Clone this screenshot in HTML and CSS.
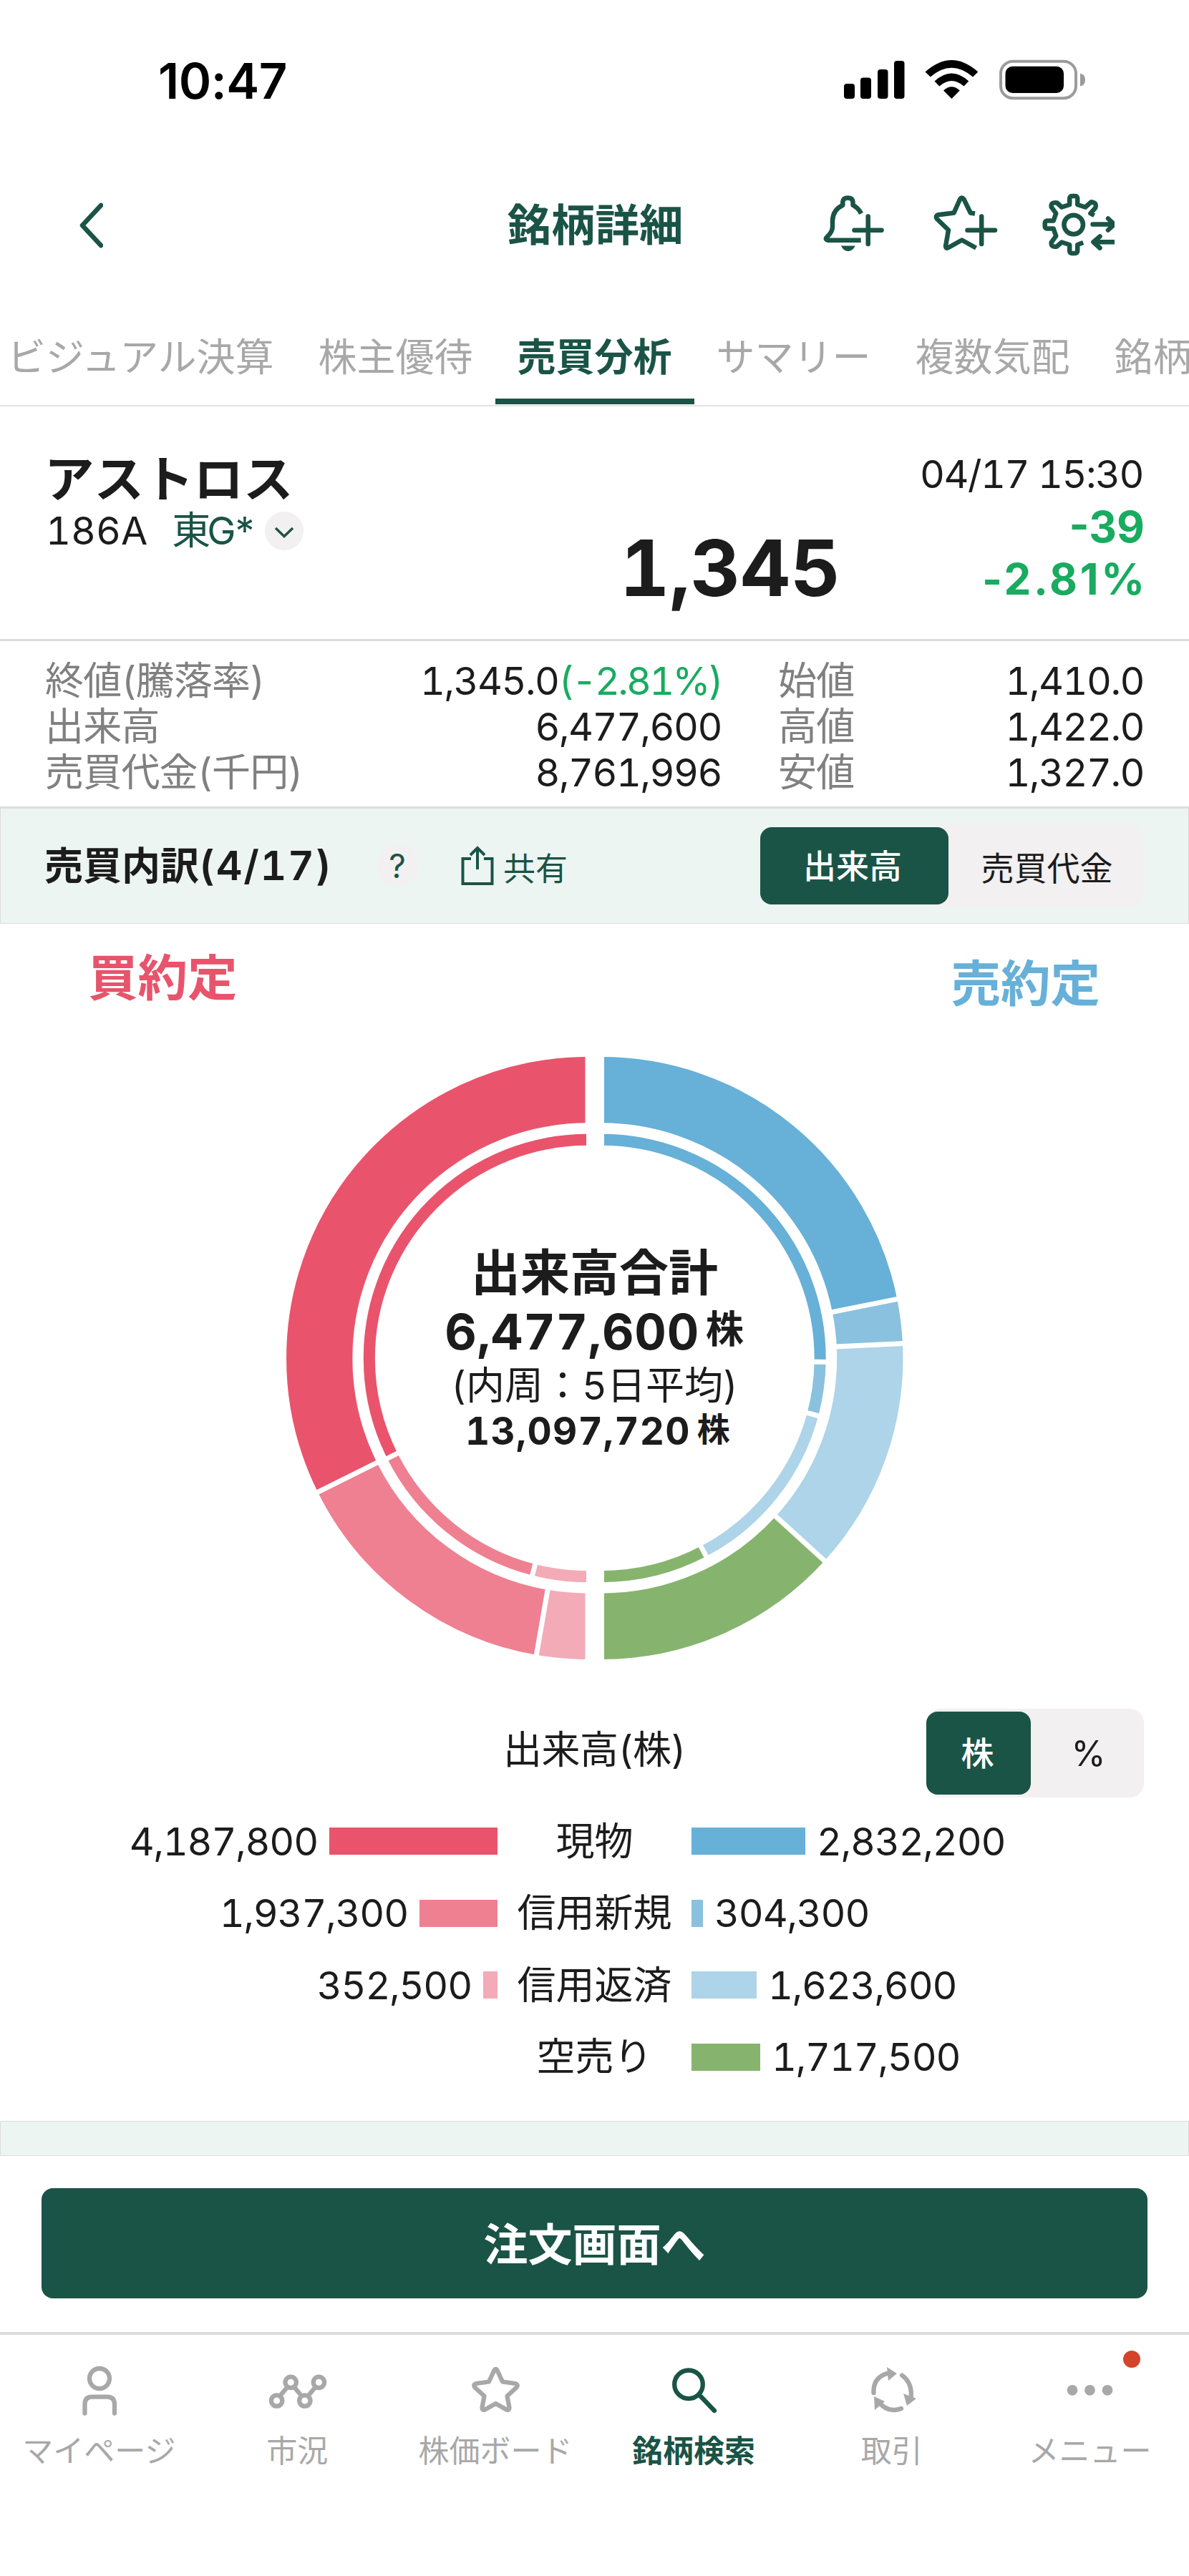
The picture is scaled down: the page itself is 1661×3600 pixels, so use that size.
FILE: index.html
```html
<!DOCTYPE html>
<html lang="ja">
<head>
<meta charset="UTF-8">
<meta name="viewport" content="width=device-width, initial-scale=1.0">
<title>銘柄詳細</title>
<link rel="stylesheet" href="styles.css">
</head>
<body>
    <div class="status-bar">
        <span class="clock">10:47</span>
        <svg class="status-icons" width="340" height="60" viewBox="0 0 340 60">
            <rect x="1" y="35" width="15" height="21" rx="4"/>
            <rect x="24" y="26.500" width="15" height="29.500" rx="4"/>
            <rect x="48" y="15" width="14.500" height="41" rx="4"/>
            <rect x="71" y="3" width="14.500" height="53" rx="4"/>
            <path d="M114.500 18.500Q151.400-14.500 188.300 18.500L181 25.500Q151.400 0 121.800 25.500Z"/>
            <path d="M127.500 31.500Q151.400 9.500 175.300 31.500L168.500 38.500Q151.400 23.500 134.300 38.500Z"/>
            <path d="M140 44.500Q151.400 34 162.800 44.500L151.400 56Z"/>
            <rect x="220" y="3.700" width="105" height="51.500" rx="17" fill="none" stroke="#9b9b9b" stroke-width="4"/>
            <rect x="226.500" y="10.700" width="81.500" height="37.300" rx="10"/>
            <path d="M331 20.500Q338 22 338 29.500T331 38.500Z" fill="#9b9b9b"/>
        </svg>
    </div>

    <header class="header">
        <svg class="back" width="40" height="70" viewBox="0 0 40 70"><path d="M37 7L11 35L37 63"/></svg>
        <h1>銘柄詳細</h1>
        <div class="header-icons">
            <svg width="88" height="92" viewBox="0 0 88 92">
                <path d="M52.700 67.700H7Q1.500 66.500 5.500 63Q13 56 13 49V40Q13.700 25 27.300 18.700V14Q28 8.500 34.400 8.500T41.500 14V18.700Q49 22.500 53 30.500"/>
                <path class="solid" d="M24.800 75.500H44.800Q41 83 34.800 83T24.800 75.500Z"/>
                <path class="round" d="M62.700 34.500V73M43.500 53.700H81.500"/>
            </svg>
            <svg class="favorite" width="92" height="92" viewBox="0 0 92 92">
                <path d="M59 30.500L52.800 29.500L43.500 10.500Q40.700 6.500 38 10.500L29.600 29.500L7.500 32.200Q3 34 6 38L22 53.500L18 76Q18.500 80 22 78L40.700 67.500L60.500 78.500"/>
                <path class="round" d="M68.200 34.500V73M48.500 53.700H87"/>
            </svg>
            <svg width="103" height="92" viewBox="0 0 103 92">
                <path transform="translate(45.700 46)" d="M29-13L23.700-15.900L30.500-23.500Q33-31 24.700-31.800L16.500-24.500L5.500-28V-37Q5-40 2-40H-2Q-5-40-5.500-37V-28L-16.500-24.500L-23-30.500Q-32-32-31-24.700L-24.500-15.900L-28-5.500H-37Q-40-5-40-2V2Q-40 5-37 5.500H-28L-24.500 15.900L-31 24.700Q-32 32-23.500 30.500L-16.500 24.500L-5.500 28V37Q-5 40-2 40H2Q5 40 5.500 37V28L13.500 25"/>
                <circle cx="45.700" cy="46" r="13.300"/>
                <path class="round" d="M72.500 45.500H104M94 37.500L102.500 45.500L94 53.500M73.500 70.300H104M82.500 62.500L73.500 70.300L82.500 78.500"/>
            </svg>
        </div>
    </header>

    <nav class="tabs">
        <a class="tab">ビジュアル決算</a>
        <a class="tab">株主優待</a>
        <a class="tab active">売買分析</a>
        <a class="tab">サマリー</a>
        <a class="tab">複数気配</a>
        <a class="tab">銘柄</a>
    </nav>

    <section class="summary">
        <div class="stock">
            <div class="stock-name">アストロス</div>
            <div class="stock-code">
                <span>186A</span>
                <span class="market">東G*</span>
                <svg width="54" height="54" viewBox="0 0 54 54"><circle cx="27" cy="27" r="27"/><path d="M15 23L27 34.500L39 23"/></svg>
            </div>
        </div>
        <div class="price">1,345</div>
        <div class="change">
            <div class="date">04/17 15:30</div>
            <div class="down">-39</div>
            <div class="down rate">-2.81%</div>
        </div>
    </section>

    <section class="stats">
        <span class="label">終値(騰落率)</span>
        <span class="value">1,345.0<span class="pct">(-2.81%)</span></span>
        <span class="label">始値</span>
        <span class="value">1,410.0</span>
        <span class="label">出来高</span>
        <span class="value">6,477,600</span>
        <span class="label">高値</span>
        <span class="value">1,422.0</span>
        <span class="label">売買代金(千円)</span>
        <span class="value">8,761,996</span>
        <span class="label">安値</span>
        <span class="value">1,327.0</span>
    </section>

    <section class="breakdown-head">
        <h2>売買内訳<span class="day">(4/17)</span></h2>
        <span class="help">?</span>
        <a class="share">
            <svg width="46" height="56" viewBox="0 0 46 56"><path d="M14 18H2.500V53H43.500V18H32M23 33V3M13 13L23 3L33 13"/></svg>
            <span>共有</span>
        </a>
        <div class="toggle toggle-wide">
            <span class="on">出来高</span>
            <span>売買代金</span>
        </div>
    </section>

    <section class="chart">
        <div class="sides">
            <span class="buy">買約定</span>
            <span class="sell">売約定</span>
        </div>
        <div class="donut">
            <svg width="862" height="844" viewBox="0 0 862 844">
                <!-- buy side, counterclockwise from the top -->
                <g transform="translate(421 422) scale(-1 1)">
                    <g class="ring">
                        <circle r="374.800" pathLength="360" stroke-dasharray="116.400 360" stroke="#e9546c" transform="rotate(-90)"/>
                        <circle r="374.800" pathLength="360" stroke-dasharray="53.800 360" stroke="#ef8091" transform="rotate(26.400)"/>
                        <circle r="374.800" pathLength="360" stroke-dasharray="9.800 360" stroke="#f3abb7" transform="rotate(80.200)"/>
                    </g>
                    <g class="ring-inner">
                        <circle r="305.200" pathLength="360" stroke-dasharray="116.600 360" stroke="#e9546c" transform="rotate(-90)"/>
                        <circle r="305.200" pathLength="360" stroke-dasharray="49.100 360" stroke="#ef8091" transform="rotate(26.600)"/>
                        <circle r="305.200" pathLength="360" stroke-dasharray="14.300 360" stroke="#f3abb7" transform="rotate(75.700)"/>
                    </g>
                    <g class="gap">
                        <path d="M0-424V-322M0 424V322"/>
                        <path d="M0-318V-290M0 318V290" stroke-width="4"/>
                        <path d="M0-424V-322" transform="rotate(116.400)"/>
                        <path d="M0-424V-322" transform="rotate(170.200)"/>
                        <path d="M0-318V-290" transform="rotate(116.600)"/>
                        <path d="M0-318V-290" transform="rotate(165.700)"/>
                    </g>
                </g>
                <!-- sell side, clockwise from the top -->
                <g transform="translate(440.500 422)">
                    <g class="ring">
                        <circle r="374.800" pathLength="360" stroke-dasharray="78.700 360" stroke="#67b0d8" transform="rotate(-90)"/>
                        <circle r="374.800" pathLength="360" stroke-dasharray="8.500 360" stroke="#8ac1df" transform="rotate(-11.300)"/>
                        <circle r="374.800" pathLength="360" stroke-dasharray="45.100 360" stroke="#add4e8" transform="rotate(-2.800)"/>
                        <circle r="374.800" pathLength="360" stroke-dasharray="47.700 360" stroke="#86b46e" transform="rotate(42.300)"/>
                    </g>
                    <g class="ring-inner">
                        <circle r="305.200" pathLength="360" stroke-dasharray="91 360" stroke="#67b0d8" transform="rotate(-90)"/>
                        <circle r="305.200" pathLength="360" stroke-dasharray="13.900 360" stroke="#8ac1df" transform="rotate(1)"/>
                        <circle r="305.200" pathLength="360" stroke-dasharray="47.300 360" stroke="#add4e8" transform="rotate(14.900)"/>
                        <circle r="305.200" pathLength="360" stroke-dasharray="27.800 360" stroke="#86b46e" transform="rotate(62.200)"/>
                    </g>
                    <g class="gap">
                        <path d="M0-424V-290M0 424V290"/>
                        <path d="M0-424V-322" transform="rotate(78.700)"/>
                        <path d="M0-424V-322" transform="rotate(87.200)"/>
                        <path d="M0-424V-322" transform="rotate(132.300)"/>
                        <path d="M0-318V-290" transform="rotate(91)"/>
                        <path d="M0-318V-290" transform="rotate(104.900)"/>
                        <path d="M0-318V-290" transform="rotate(152.200)"/>
                    </g>
                </g>
            </svg>
            <div class="donut-text">
                <div class="total-title">出来高合計</div>
                <div class="total">6,477,600<small>株</small></div>
                <div class="avg-title">(内周：5日平均)</div>
                <div class="avg">13,097,720<small>株</small></div>
            </div>
        </div>

        <div class="table-head">
            <span class="table-title">出来高(株)</span>
            <div class="toggle toggle-narrow">
                <span class="on">株</span>
                <span>%</span>
            </div>
        </div>
        <div class="bars">
            <div class="bar-left">4,187,800<i class="bar red-1" style="width: 235px"></i></div>
            <div class="bar-name">現物</div>
            <div class="bar-right"><i class="bar blue-1" style="width: 159px"></i>2,832,200</div>

            <div class="bar-left">1,937,300<i class="bar red-2" style="width: 109px"></i></div>
            <div class="bar-name">信用新規</div>
            <div class="bar-right"><i class="bar blue-2" style="width: 16px"></i>304,300</div>

            <div class="bar-left">352,500<i class="bar red-3" style="width: 20px"></i></div>
            <div class="bar-name">信用返済</div>
            <div class="bar-right"><i class="bar blue-3" style="width: 91px"></i>1,623,600</div>

            <div class="bar-left"></div>
            <div class="bar-name">空売り</div>
            <div class="bar-right"><i class="bar green" style="width: 96px"></i>1,717,500</div>
        </div>
    </section>

    <div class="divider"></div>

    <div class="order">
        <button class="order-button">注文画面へ</button>
    </div>

    <nav class="bottom-nav">
        <a class="nav-item">
            <svg width="80" height="80" viewBox="0 0 80 80"><circle cx="41" cy="24" r="14"/><path d="M20.500 72.500V60Q20.500 49.700 30.500 49.700H51.500Q62 49.700 62 60V72.500"/></svg>
            マイページ
        </a>
        <a class="nav-item">
            <svg width="80" height="80" viewBox="0 0 80 80"><circle cx="11.600" cy="55" r="7.700"/><circle cx="31.200" cy="29.300" r="7.700"/><circle cx="50.800" cy="55" r="7.700"/><circle cx="70.400" cy="29.300" r="7.700"/><path d="M16.400 48L26.400 36M36 36L46 48M55.600 48L65.600 36"/></svg>
            市況
        </a>
        <a class="nav-item">
            <svg width="80" height="80" viewBox="0 0 80 80"><path d="M38 13.500Q40.500 8.500 43 13.500L50 28.500L67.500 31Q73 32.500 69 37L56.500 48.500L59.500 64.500Q59.500 69 55.500 67.500L40.500 59L25.500 67.500Q21.500 69 21.500 64.500L24.500 48.500L12 37Q8 32.500 13.500 31L31 28.500Z"/></svg>
            株価ボード
        </a>
        <a class="nav-item active">
            <svg width="80" height="80" viewBox="0 0 80 80"><circle cx="33" cy="32.300" r="19.800"/><path d="M47.500 46.500L69 69"/></svg>
            銘柄検索
        </a>
        <a class="nav-item">
            <svg width="80" height="80" viewBox="-1 0 80 80">
                <path d="M13.500 44Q12.500 23 32 17M53 19.500Q68 30 65.500 51M52 66Q33 73 20 56"/>
                <path class="solid" d="M32 8L46 17L34 27ZM55 45L73 52L60 62ZM14 49L29 56L15 68Z"/>
            </svg>
            取引
        </a>
        <a class="nav-item">
            <svg width="80" height="80" viewBox="0 0 80 80"><g class="solid"><circle cx="15" cy="40.300" r="7.400"/><circle cx="39.500" cy="40.300" r="7.400"/><circle cx="64" cy="40.300" r="7.400"/></g></svg>
            メニュー
            <i class="badge"></i>
        </a>
    </nav>
</body>
</html>
```
FILE: styles.css
```css
:root {
    --primary-color: #1a5446;
    --text-color: #1c1c1c;
    --muted-color: #a8a8a8;
    --label-color: #808080;
    --down-color: #19ab60;
    --band-color: #edf5f2;
    --line-color: #dcdcdc;
    --toggle-color: #f2f0f1;
}

* {
    box-sizing: border-box;
}

body {
    margin: 0;
    width: 1661px;
    height: 3600px;
    overflow: hidden;
    background: #fff;
    color: var(--text-color);
    font-family: Inter, "Noto Sans CJK JP", sans-serif;
    font-size: 54px;
    font-feature-settings: "tnum";
}

h1, h2 {
    margin: 0;
}

svg {
    display: block;
    flex: none;
}

.status-bar {
    height: 214px;
    padding: 82px 143px 0 221px;
    display: flex;
    justify-content: space-between;
}

.clock {
    font-size: 69px;
    font-weight: 600;
    line-height: 62px;
    letter-spacing: -0.5px;
    color: #000;
    font-feature-settings: normal;
}

.header {
    height: 200px;
    padding: 2px 104px 0;
    display: grid;
    grid-template-columns: 1fr auto 1fr;
    align-items: center;
    color: var(--primary-color);
}

.header svg {
    fill: none;
    stroke: var(--primary-color);
    stroke-width: 6.5;
    stroke-linejoin: round;
}

.header .round, .back {
    stroke-linecap: round;
}

.header .solid {
    fill: var(--primary-color);
    stroke: none;
}

.header h1 {
    padding-left: 2px;
    font-size: 61.5px;
    font-weight: 700;
    line-height: 80px;
}

.header-icons {
    display: flex;
    justify-content: flex-end;
    gap: 62px;
    margin-top: -3px;
}

.favorite {
    margin: 0 -3px 0 3px;
}

.tabs {
    width: 1661px;
    height: 154px;
    padding-top: 56px;
    display: flex;
    border-bottom: 2px solid #e2e2e2;
    white-space: nowrap;
    overflow: hidden;
}

.tab {
    flex: none;
    height: 95px;
    padding: 0 31px;
    line-height: 60px;
    color: var(--muted-color);
}

.tab:first-child {
    margin-left: -21px;
}

.tab:last-child {
    padding-right: 0;
}

.tab.active {
    color: var(--primary-color);
    font-weight: 700;
    border-bottom: 8px solid var(--primary-color);
}

.summary {
    height: 328px;
    padding: 58px 64px 0;
    display: flex;
    border-bottom: 3px solid var(--line-color);
}

.stock {
    flex: 1;
}

.stock-name {
    padding-top: 3px;
    margin-left: -2px;
    font-size: 69.5px;
    font-weight: 700;
    line-height: 82px;
    margin-bottom: -3px;
}

.stock-code {
    display: flex;
    align-items: center;
    line-height: 68px;
}

.market {
    margin: 0 15px 0 34px;
    color: var(--primary-color);
    letter-spacing: -5px;
}

.stock-code circle {
    fill: var(--toggle-color);
}

.stock-code path {
    fill: none;
    stroke: var(--primary-color);
    stroke-width: 3.5;
}

.price {
    padding-top: 103px;
    font-size: 108px;
    font-weight: 700;
    line-height: 130px;
}

.change {
    width: 423px;
    text-align: right;
    line-height: 74px;
}

.date {
    letter-spacing: -1.5px;
}

.down {
    margin-right: -2px;
    color: var(--down-color);
    font-size: 60px;
    font-weight: 700;
    line-height: 73px;
    font-feature-settings: normal;
}

.rate {
    margin-right: -6px;
    letter-spacing: 3.7px;
}

.stats {
    height: 234px;
    padding: 24px 63px 0 63px;
    display: grid;
    grid-template-columns: 380px 565px 180px 410px;
    grid-auto-rows: 64px;
    line-height: 64px;
    border-bottom: 3px solid var(--line-color);
}

.stats .label {
    color: var(--label-color);
    letter-spacing: -0.8px;
}

.stats .label:nth-child(4n+3) {
    padding-left: 79px;
    white-space: nowrap;
}

.stats .value {
    text-align: right;
    letter-spacing: -1.5px;
}

.stats .pct {
    color: var(--down-color);
    letter-spacing: -2.8px;
}

.breakdown-head {
    height: 161px;
    padding: 0 63px 0 61px;
    display: flex;
    align-items: center;
    background: var(--band-color);
    border: 1px solid var(--line-color);
    border-top: none;
}

.breakdown-head h2 {
    width: 465px;
    padding-top: 2px;
    font-size: 54px;
    font-weight: 600;
    line-height: 80px;
}

.day {
    font-size: 57px;
    line-height: 1;
    letter-spacing: 1.6px;
}

.help {
    width: 56px;
    height: 60px;
    border-radius: 50%;
    background: var(--toggle-color);
    color: var(--primary-color);
    font-size: 46px;
    line-height: 60px;
    text-align: center;
}

.share {
    flex: 1;
    margin-left: 61px;
    display: flex;
    align-items: center;
    gap: 13px;
    color: var(--primary-color);
    font-size: 45px;
}

.share span {
    padding-top: 2px;
}

.share svg {
    fill: none;
    stroke: var(--primary-color);
    stroke-width: 4;
}

.toggle {
    display: flex;
    align-items: center;
    background: var(--toggle-color);
    border-radius: 20px;
    font-size: 46px;
    text-align: center;
}

.toggle span {
    flex: 1;
}

.toggle .on {
    flex: none;
    border-radius: 16px;
    background: var(--primary-color);
    color: #fff;
    font-weight: 500;
}

.toggle-wide {
    width: 535px;
    height: 116px;
    background: linear-gradient(to right, transparent 243px, var(--toggle-color) 243px);
}

.toggle-wide span:last-child {
    padding-left: 3px;
}

.toggle-wide .on {
    width: 263px;
    padding-right: 5px;
    line-height: 108px;
}

.toggle-narrow {
    width: 304px;
    height: 124px;
    margin-right: -1px;
}

.toggle-narrow .on {
    width: 146px;
    padding-right: 3px;
    line-height: 116px;
}

.toggle-narrow span:last-child {
    padding-left: 3px;
    font-size: 49px;
}

.chart {
    height: 1673px;
}

.sides {
    height: 185px;
    padding: 26px 124px 0 123px;
    display: flex;
    justify-content: space-between;
    font-size: 69.5px;
    font-weight: 700;
    line-height: 100px;
}

.buy {
    color: #e8546c;
}

.sell {
    color: #67b0d8;
    padding-top: 8px;
}

.donut {
    width: 862px;
    margin: 0 auto;
    display: grid;
}

.donut > * {
    grid-area: 1 / 1;
}

.ring circle {
    fill: none;
    stroke-width: 92.3;
}

.ring-inner circle {
    fill: none;
    stroke-width: 16.1;
}

.gap {
    stroke: #fff;
    stroke-width: 7;
}

.donut-text {
    padding-top: 263px;
    text-align: center;
}

.total-title {
    font-size: 69px;
    font-weight: 700;
    line-height: 80px;
}

.total {
    font-size: 69px;
    font-weight: 700;
    line-height: 84px;
    height: 84px;
    letter-spacing: 0.7px;
}

.total small {
    margin-left: 9px;
    font-size: 53px;
    line-height: 1;
    vertical-align: 9px;
}

.avg-title {
    line-height: 68px;
}

.avg {
    font-size: 53px;
    font-weight: 700;
    line-height: 59px;
    padding-left: 10px;
    letter-spacing: 1.2px;
}

.avg small {
    margin-left: 9px;
    font-size: 46px;
    line-height: 1;
    vertical-align: 5px;
}

.table-head {
    margin-top: 68px;
    padding: 0 64px;
    display: grid;
    grid-template-columns: 1fr auto 1fr;
    align-items: center;
}

.table-title {
    grid-column: 2;
    margin-top: -17px;
    letter-spacing: -0.5px;
}

.table-head .toggle {
    justify-self: end;
}

.bars {
    margin-top: 11px;
    display: grid;
    grid-template-columns: 695px 271px 1fr;
    grid-auto-rows: 100.5px;
    align-items: center;
}

.bar-left, .bar-right {
    display: flex;
    align-items: center;
    gap: 16px;
    letter-spacing: -1.2px;
}

.bar-left {
    justify-content: flex-end;
}

.bar-name {
    margin-top: -8px;
    text-align: center;
}

.bar {
    height: 38px;
}

.red-1 { background: #e9546c; }
.red-2 { background: #ef8091; }
.red-3 { background: #f3abb7; }
.blue-1 { background: #67b0d8; }
.blue-2 { background: #8ac1df; }
.blue-3 { background: #add4e8; }
.green { background: #86b46e; }

.divider {
    height: 49px;
    background: var(--band-color);
    border: 1px solid var(--line-color);
}

.order {
    height: 246px;
    padding: 45px 58px 0;
}

.order-button {
    width: 100%;
    height: 154px;
    padding-bottom: 6px;
    border: none;
    border-radius: 16px;
    background: var(--primary-color);
    color: #fff;
    font-family: inherit;
    font-size: 62px;
    font-weight: 700;
}

.bottom-nav {
    height: 341px;
    padding-top: 37px;
    display: grid;
    grid-template-columns: repeat(6, 1fr);
    border-top: 4px solid var(--line-color);
}

.nav-item {
    position: relative;
    display: flex;
    flex-direction: column;
    align-items: center;
    color: var(--muted-color);
    font-size: 43px;
    line-height: 90px;
    white-space: nowrap;
}

.nav-item.active {
    color: var(--primary-color);
    font-weight: 700;
}

.nav-item svg {
    fill: none;
    stroke: currentColor;
    stroke-width: 6.3;
    stroke-linecap: round;
    stroke-linejoin: round;
    overflow: visible;
}

.nav-item .solid {
    fill: currentColor;
    stroke: none;
}

.badge {
    position: absolute;
    top: -15px;
    left: 185px;
    width: 24px;
    height: 24px;
    border-radius: 50%;
    background: #d4432c;
}
```
